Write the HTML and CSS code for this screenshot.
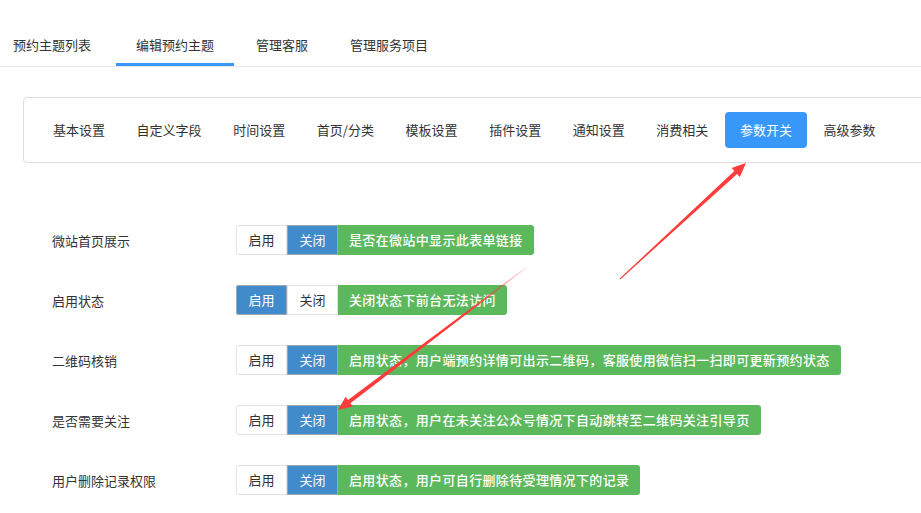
FILE: index.html
```html
<!DOCTYPE html>
<html lang="zh-CN">
<head>
    <meta charset="UTF-8">
    <meta name="viewport" content="width=device-width, initial-scale=1.0">
    <title>编辑预约主题</title>
    <link rel="stylesheet" href="styles.css">
</head>
<body>

    <div class="top-tabs">
        <a class="tab first">预约主题列表</a>
        <a class="tab active">编辑预约主题</a>
        <a class="tab">管理客服</a>
        <a class="tab">管理服务项目</a>
    </div>

    <div class="content">
        <!-- 子菜单 -->
        <div class="sub-nav">
            <a class="sub-item">基本设置</a>
            <a class="sub-item">自定义字段</a>
            <a class="sub-item">时间设置</a>
            <a class="sub-item">首页/分类</a>
            <a class="sub-item">模板设置</a>
            <a class="sub-item">插件设置</a>
            <a class="sub-item">通知设置</a>
            <a class="sub-item">消费相关</a>
            <a class="sub-item active">参数开关</a>
            <a class="sub-item">高级参数</a>
        </div>

        <!-- 参数开关 -->
        <div class="form">
            <div class="form-row">
                <label class="form-label">微站首页展示</label>
                <div class="btn-group">
                    <span class="btn">启用</span>
                    <span class="btn on">关闭</span>
                </div>
                <span class="hint">是否在微站中显示此表单链接</span>
            </div>
            <div class="form-row">
                <label class="form-label">启用状态</label>
                <div class="btn-group">
                    <span class="btn on">启用</span>
                    <span class="btn">关闭</span>
                </div>
                <span class="hint">关闭状态下前台无法访问</span>
            </div>
            <div class="form-row">
                <label class="form-label">二维码核销</label>
                <div class="btn-group">
                    <span class="btn">启用</span>
                    <span class="btn on">关闭</span>
                </div>
                <span class="hint">启用状态，用户端预约详情可出示二维码，客服使用微信扫一扫即可更新预约状态</span>
            </div>
            <div class="form-row">
                <label class="form-label">是否需要关注</label>
                <div class="btn-group">
                    <span class="btn">启用</span>
                    <span class="btn on">关闭</span>
                </div>
                <span class="hint">启用状态，用户在未关注公众号情况下自动跳转至二维码关注引导页</span>
            </div>
            <div class="form-row">
                <label class="form-label">用户删除记录权限</label>
                <div class="btn-group">
                    <span class="btn">启用</span>
                    <span class="btn on">关闭</span>
                </div>
                <span class="hint">启用状态，用户可自行删除待受理情况下的记录</span>
            </div>
        </div>
    </div>

    <!-- 标注箭头 -->
    <svg class="marks" width="921" height="513" viewBox="0 0 921 513">
        <defs>
            <linearGradient id="fade" gradientUnits="userSpaceOnUse" x1="527" y1="267" x2="470" y2="310">
                <stop offset="0" stop-color="#ff3b3b" stop-opacity="0.1"/>
                <stop offset="1" stop-color="#ff3b3b" stop-opacity="1"/>
            </linearGradient>
        </defs>
        <polygon fill="#ff3b3b" points="620.3,279.4 737.1,174.0 739.8,176.9 746,163 731.6,168.1 734.3,171.0 619.7,278.6"/>
        <polygon fill="url(#fade)" points="527.3,267.4 350.4,403.2 352.8,406.4 338,410 345.6,396.8 348.0,400.0 526.7,266.6"/>
    </svg>

</body>
</html>
```

FILE: styles.css
```css
html, body {
    overflow: hidden;
}
body {
    margin: 0;
    font-family: "Noto Sans CJK SC", "Liberation Sans", sans-serif;
    font-size: 13px;
    color: #333;
    background: #fff;
    position: relative;
    width: 921px;
    height: 513px;
}
.top-tabs {
    display: flex;
    padding-top: 26px;
    border-bottom: 1px solid #e6e6e6;
}
.tab {
    display: block;
    height: 37px;
    line-height: 37px;
    padding: 0 20px;
    margin-right: 2px;
    border-bottom: 3px solid transparent;
    color: #333;
}
.tab.first {
    padding-left: 13px;
    padding-right: 23px;
}
.tab.active {
    border-bottom-color: #3898fa;
}
.content {
    padding-left: 23px;
}
.sub-nav {
    display: flex;
    width: 940px;
    box-sizing: border-box;
    margin-top: 30px;
    padding: 14px;
    border: 1px solid #ddd;
    border-radius: 4px;
}
.sub-item {
    display: block;
    height: 36px;
    line-height: 36px;
    padding: 0 15px;
    margin-right: 1.6px;
    border-radius: 4px;
    color: #333;
    white-space: nowrap;
}
.sub-item.active {
    background: #3898fa;
    color: #fff;
}
.form {
    margin-top: 47px;
    padding-left: 29px;
}
.form-row {
    display: flex;
    align-items: center;
    height: 60px;
}
.form-label {
    width: 184px;
    flex-shrink: 0;
}
.btn-group {
    display: flex;
}
.btn {
    display: block;
    width: 51px;
    height: 30px;
    box-sizing: border-box;
    line-height: 28px;
    text-align: center;
    border: 1px solid #e3e3e3;
    background: #fff;
    color: #333;
}
.btn:first-child {
    border-radius: 2px 0 0 2px;
}
.btn.on {
    background: #428bca;
    border-color: #9ca8b4;
    color: #fff;
}
.hint {
    display: block;
    height: 30px;
    line-height: 30px;
    padding: 0 11px;
    background: #5cb85c;
    color: #fff;
    font-weight: 500;
    letter-spacing: 0.35px;
    border-radius: 0 3px 3px 0;
    white-space: nowrap;
}
.marks {
    position: absolute;
    left: 0;
    top: 0;
    pointer-events: none;
}
```
